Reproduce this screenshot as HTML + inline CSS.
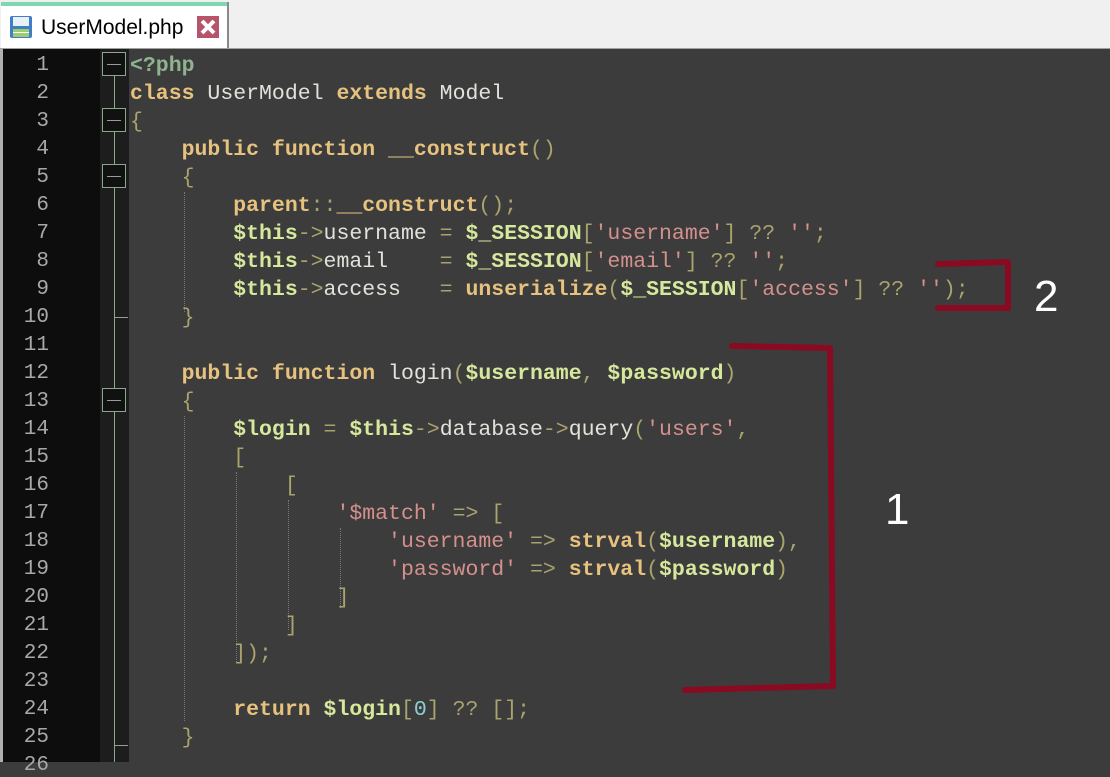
<!DOCTYPE html><html><head><style>
body{margin:0;width:1110px;height:762px;overflow:hidden;background:#3c3c3c;position:relative;font-family:"Liberation Mono",monospace}
.tabbar{position:absolute;left:0;top:0;width:1110px;height:48px;background:#f0f0f0;border-bottom:1px solid #a0a0a0}
.tab{position:absolute;left:1px;top:2px;width:226px;height:46px;background:#fff;border-right:2px solid #8a8a8a}
.tab .strip{position:absolute;left:0;top:0;width:100%;height:4px;background:#7fd6b3}
.tab .t{position:absolute;left:40px;top:14px;font:21px "Liberation Sans",sans-serif;color:#000}
.gut{position:absolute;left:0;top:49px;width:100px;height:713px;background:#0d0d0d;border-left:3px solid #b0b0b0;box-sizing:border-box}
.fold{position:absolute;left:100px;top:49px;width:29px;height:713px;background:#1d1d1d}
.vl{position:absolute;left:114px;width:1px;background:#8aa88a}
.box{position:absolute;left:102px;width:24px;height:24px;border:1px solid #8aa88a;background:#111;box-sizing:border-box}
.box:after{content:"";position:absolute;left:4px;right:4px;top:11px;height:1px;background:#999}
.tick{position:absolute;left:115px;width:13px;height:1px;background:#999}
.ln{position:absolute;left:0;width:49px;text-align:right;color:#a8a8a8;font-size:21px}
.c{position:absolute;left:130px;white-space:pre;font-size:21.5px;color:#e2e2dc}
.k{color:#e6c27e;font-weight:bold}.v{color:#d6e89c;font-weight:bold}.s{color:#d4908c}.p{color:#a9a36c}.g{color:#8fb38f;font-weight:bold}.n{color:#8ccfcf}
.ig{position:absolute;width:0;border-left:1px dotted #777}
</style></head><body>
<div class="tabbar"><div class="tab"><div class="strip"></div>
<svg style="position:absolute;left:8px;top:13px" width="24" height="24" viewBox="0 0 24 24"><rect x="1" y="1" width="22" height="22" rx="2" fill="#3f7fc8"/><rect x="4" y="2" width="16" height="9" fill="#e8f0f8"/><rect x="4" y="14" width="16" height="8" fill="#9ccf6a"/><rect x="4" y="17" width="16" height="1" fill="#fff"/></svg>
<div class="t">UserModel.php</div>
<svg style="position:absolute;left:196px;top:14px" width="22" height="22" viewBox="0 0 22 22"><rect width="22" height="22" fill="#b5546a"/><path d="M5 5L17 17M17 5L5 17" stroke="#fff" stroke-width="4"/></svg>
</div></div>
<div class="gut"></div><div class="fold"></div>
<div class="vl" style="top:76px;height:686px"></div>
<div class="box" style="top:52px"></div><div class="box" style="top:108px"></div><div class="box" style="top:164px"></div><div class="box" style="top:388px"></div>
<div class="tick" style="top:317px"></div><div class="tick" style="top:745px"></div>
<div class="ig" style="left:184px;top:192px;height:120px"></div>
<div class="ig" style="left:184px;top:416px;height:305px"></div>
<div class="ig" style="left:236px;top:472px;height:190px"></div>
<div class="ig" style="left:288px;top:500px;height:130px"></div>
<div class="ig" style="left:340px;top:528px;height:80px"></div>
<div id="L"></div>
<script>
var lines=[
'<span class="g">&lt;?php</span>',
'<span class="k">class</span> UserModel <span class="k">extends</span> Model',
'<span class="p">{</span>',
'    <span class="k">public function __construct</span><span class="p">()</span>',
'    <span class="p">{</span>',
'        <span class="k">parent</span><span class="p">::</span><span class="k">__construct</span><span class="p">();</span>',
'        <span class="v">$this</span><span class="p">-&gt;</span>username <span class="p">=</span> <span class="v">$_SESSION</span><span class="p">[</span><span class="s">\'username\'</span><span class="p">] ?? </span><span class="s">\'\'</span><span class="p">;</span>',
'        <span class="v">$this</span><span class="p">-&gt;</span>email    <span class="p">=</span> <span class="v">$_SESSION</span><span class="p">[</span><span class="s">\'email\'</span><span class="p">] ?? </span><span class="s">\'\'</span><span class="p">;</span>',
'        <span class="v">$this</span><span class="p">-&gt;</span>access   <span class="p">=</span> <span class="k">unserialize</span><span class="p">(</span><span class="v">$_SESSION</span><span class="p">[</span><span class="s">\'access\'</span><span class="p">] ?? </span><span class="s">\'\'</span><span class="p">);</span>',
'    <span class="p">}</span>',
'',
'    <span class="k">public function</span> login<span class="p">(</span><span class="v">$username</span><span class="p">,</span> <span class="v">$password</span><span class="p">)</span>',
'    <span class="p">{</span>',
'        <span class="v">$login</span> <span class="p">=</span> <span class="v">$this</span><span class="p">-&gt;</span>database<span class="p">-&gt;</span>query<span class="p">(</span><span class="s">\'users\'</span><span class="p">,</span>',
'        <span class="p">[</span>',
'            <span class="p">[</span>',
'                <span class="s">\'$match\'</span> <span class="p">=&gt; [</span>',
'                    <span class="s">\'username\'</span> <span class="p">=&gt;</span> <span class="k">strval</span><span class="p">(</span><span class="v">$username</span><span class="p">),</span>',
'                    <span class="s">\'password\'</span> <span class="p">=&gt;</span> <span class="k">strval</span><span class="p">(</span><span class="v">$password</span><span class="p">)</span>',
'                <span class="p">]</span>',
'            <span class="p">]</span>',
'        <span class="p">]);</span>',
'',
'        <span class="k">return</span> <span class="v">$login</span><span class="p">[</span><span class="n">0</span><span class="p">] ?? [];</span>',
'    <span class="p">}</span>',
''];
var h='';for(var i=0;i<26;i++){var t=52+28*i;h+='<div class="ln" style="top:'+(t+2)+'px">'+(i+1)+'</div><div class="c" style="top:'+t+'px;line-height:28px">'+lines[i]+'</div>';}
document.getElementById('L').innerHTML=h;
</script>
<svg style="position:absolute;left:0;top:0" width="1110" height="762">
<path d="M732 346L830 348L833 686L685 690" fill="none" stroke="#8a0a22" stroke-width="6" stroke-linejoin="round" stroke-linecap="round"/>
<path d="M938 264L1008 262L1008 308L938 308" fill="none" stroke="#8a0a22" stroke-width="6" stroke-linejoin="round" stroke-linecap="round"/>
<text x="885" y="524" font-family="Liberation Sans" font-size="44" fill="#fff">1</text>
<text x="1034" y="311" font-family="Liberation Sans" font-size="44" fill="#fff">2</text>
</svg>
</body></html>
